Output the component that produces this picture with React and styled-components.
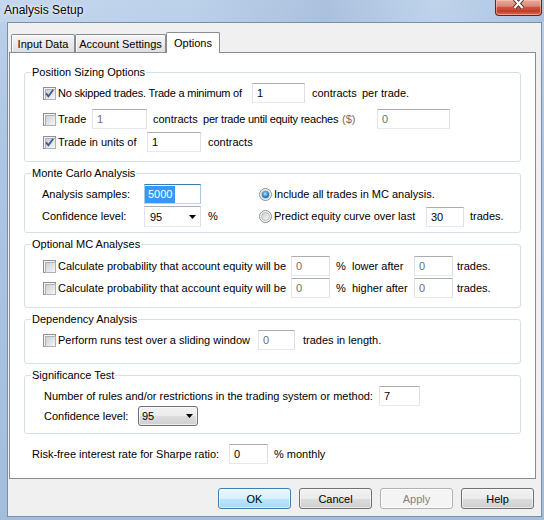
import React from "react"
import styled, { createGlobalStyle, css } from "styled-components"

const GlobalStyle = createGlobalStyle`
  html, body {
    margin: 0;
    padding: 0;
    background: #a9c2e0;
  }
  body {
    width: 544px;
    height: 520px;
    overflow: hidden;
    font-family: "Liberation Sans", Arial, sans-serif;
    font-size: 11px;
    color: #000;
  }
  * {
    box-sizing: border-box;
  }
`

const Window = styled.div`
  width: 544px;
  height: 520px;
  display: flex;
  flex-direction: column;
  background: linear-gradient(180deg, #bcd1ea 0%, #adc5e2 30%, #a3bddc 100%);
`

const TitleBar = styled.div`
  height: 22px;
  flex: none;
  display: flex;
  justify-content: space-between;
  align-items: flex-start;
  background: linear-gradient(
    90deg,
    rgba(255, 255, 255, 0.12) 0%,
    rgba(255, 255, 255, 0) 35%,
    rgba(70, 100, 150, 0.14) 60%,
    rgba(255, 255, 255, 0.05) 80%,
    rgba(70, 100, 150, 0.12) 100%
  );
`

const Title = styled.span`
  padding: 3px 0 0 4px;
  font-size: 12px;
  line-height: 15px;
  text-shadow: 0 0 5px rgba(255, 255, 255, 0.9), 0 0 2px rgba(255, 255, 255, 0.8);
`

const CloseButton = styled.div`
  width: 47px;
  height: 16px;
  margin-right: 2px;
  border: 1px solid #5d2620;
  border-top: 0;
  border-radius: 0 0 4px 4px;
  background: linear-gradient(180deg, #e9a99b 0%, #dc8a78 40%, #c95541 50%, #c53c26 75%, #d8735b 100%);
  box-shadow: inset 0 0 0 1px rgba(255, 210, 200, 0.5);
  display: flex;
  justify-content: center;
  align-items: flex-start;
`

const Client = styled.div`
  flex: 1;
  margin: 0 2px 3px 7px;
  border: 1px solid #7b8ea8;
  background: #f0f0f0;
  display: flex;
  flex-direction: column;
  padding-bottom: 7px;
`

const TabStrip = styled.div`
  height: 29px;
  flex: none;
  display: flex;
  align-items: flex-end;
  padding-left: 3px;
`

const Tab = styled.div`
  position: relative;
  z-index: ${p => (p.$active ? 1 : 0)};
  width: ${p => p.$w}px;
  height: ${p => (p.$active ? 21 : 18)}px;
  margin-bottom: ${p => (p.$active ? -1 : 0)}px;
  padding-top: ${p => (p.$active ? 0 : 1)}px;
  border: 1px solid #898c95;
  border-bottom: 0;
  border-radius: 2px 2px 0 0;
  background: ${p => (p.$active ? "#fff" : "linear-gradient(180deg, #f6f6f6 0%, #ebebeb 50%, #dedede 100%)")};
  box-shadow: ${p => (p.$active ? "none" : "inset 1px 1px 0 rgba(255, 255, 255, 0.8)")};
  display: flex;
  align-items: center;
  justify-content: center;
  white-space: nowrap;
`

const Panel = styled.div`
  margin: 0 5px 0 1px;
  border: 1px solid #898c95;
  background: #fff;
  padding: 12px 14px 14px;
  display: flex;
  flex-direction: column;
`

const Group = styled.fieldset`
  margin: 0;
  padding: 0 6px;
  min-width: 0;
  border: 1px solid #d5dfe5;
  border-radius: 3px;

  & + & {
    margin-top: 4px;
  }
`

const Legend = styled.legend`
  padding: 0 1px;
  font-size: 11px;
  line-height: 15px;
`

const GroupBody = styled.div`
  display: flex;
  flex-direction: column;
  padding: ${p => p.$top}px 0 ${p => p.$bottom}px ${p => p.$indent ?? 12}px;
`

const Row = styled.div`
  display: flex;
  align-items: center;
  height: ${p => p.$h ?? 20}px;
  margin-top: ${p => p.$gap ?? 0}px;
  padding-left: ${p => p.$indent ?? 0}px;
`

const Text = styled.span`
  flex: none;
  white-space: nowrap;
  line-height: 13px;
  width: ${p => (p.$w ? `${p.$w}px` : "auto")};
  margin-left: ${p => p.$ml ?? 0}px;
  letter-spacing: ${p => (p.$tight ? "-0.22px" : "0")};
  color: ${p => (p.$muted ? "#6d6d6d" : "#000")};
`

const Field = styled.div`
  flex: none;
  width: ${p => p.$w}px;
  height: 20px;
  border: 1px solid;
  border-color: ${p => (p.$focused ? "#3d7bad #a4c9e3 #b7d9ed #a4c9e3" : "#abadb3 #dbdfe6 #e3e9ef #e2e3ea")};
  background: #fff;
  padding-left: ${p => (p.$focused ? 0 : 4)}px;
  display: flex;
  align-items: center;
  color: ${p => (p.$disabled ? "#6d6d6d" : "#000")};
`

const Selection = styled.span`
  height: 17px;
  padding: 0 3px;
  display: flex;
  align-items: center;
  background: #3399ff;
  color: #fff;
`

const Combo = styled.div`
  flex: none;
  width: ${p => p.$w}px;
  height: ${p => p.$h ?? 21}px;
  display: flex;
  align-items: center;
  justify-content: space-between;
  ${p =>
    p.$variant === "list"
      ? css`
          padding: 0 4px 0 3px;
          border: 1px solid #707070;
          border-radius: 3px;
          background: linear-gradient(180deg, #f2f2f2 0%, #ebebeb 50%, #dddddd 50%, #cfcfcf 100%);
          box-shadow: inset 0 0 0 1px rgba(255, 255, 255, 0.6);
        `
      : css`
          padding: 0 4px 0 5px;
          border: 1px solid;
          border-color: #abadb3 #dbdfe6 #e3e9ef #e2e3ea;
          background: #fff;
        `}
`

const CheckBoxBox = styled.span`
  position: relative;
  flex: none;
  width: 13px;
  height: 13px;
  margin-right: 2px;
  padding: 1px;
  border: 1px solid #8e8f8f;
  background: #f4f4f4;

  &::before {
    content: "";
    display: block;
    width: 9px;
    height: 9px;
    border: 1px solid #aeb3b9;
    background: linear-gradient(135deg, #cbcfd5 0%, #e3e5e8 55%, #f7f7f7 100%);
  }

  svg {
    position: absolute;
    left: -1px;
    top: -1px;
  }
`

const RadioBox = styled.span`
  position: relative;
  flex: none;
  width: 13px;
  height: 13px;
  margin-left: ${p => p.$ml ?? 0}px;
  margin-right: 2px;
  border-radius: 50%;
  border: 1px solid #8e8f8f;
  background: #f4f4f4;

  &::before {
    content: "";
    position: absolute;
    inset: 1px;
    border-radius: 50%;
    border: 1px solid #b9bcc1;
    background: linear-gradient(135deg, #c8cbd0 0%, #e5e6e8 55%, #f8f8f8 100%);
  }

  ${p =>
    p.$checked &&
    css`
      &::after {
        content: "";
        position: absolute;
        left: 2px;
        top: 2px;
        width: 7px;
        height: 7px;
        border-radius: 50%;
        background: radial-gradient(circle at 45% 40%, #c4e8fc 0%, #4ea7e2 35%, #1166ad 70%, #0b3d6b 100%);
      }
    `}
`

const ButtonRow = styled.div`
  display: flex;
  justify-content: flex-end;
  gap: 8px;
  margin-top: 9px;
  padding-right: 7px;
`

const buttonLooks = {
  normal: css`
    border-color: #707070;
    background: linear-gradient(180deg, #f2f2f2 0%, #ebebeb 50%, #dddddd 50%, #cfcfcf 100%);
    color: #000;
  `,
  primary: css`
    border-color: #3c7fb1;
    background: linear-gradient(180deg, #eaf6fd 0%, #d9f0fc 50%, #bee6fd 50%, #a7d9f5 100%);
    color: #000;
  `,
  disabled: css`
    border-color: #adb2b5;
    background: #f4f4f4;
    color: #838383;
  `,
}

const Button = styled.div`
  width: 73px;
  height: 21px;
  border: 1px solid;
  border-radius: 3px;
  box-shadow: inset 0 0 0 1px rgba(255, 255, 255, 0.55);
  display: flex;
  align-items: center;
  justify-content: center;
  ${p => buttonLooks[p.$variant ?? "normal"]}
`

function CheckBox({ checked }) {
  return (
    <CheckBoxBox>
      {checked && (
        <svg width="13" height="13" viewBox="0 0 13 13">
          <path d="M3 6.4 L5.4 9.2 L10.2 2.8" fill="none" stroke="#3f5a92" strokeWidth="1.8" />
        </svg>
      )}
    </CheckBoxBox>
  )
}

function Arrow() {
  return (
    <svg width="7" height="4" viewBox="0 0 7 4">
      <path d="M0 0 H7 L3.5 4 Z" fill="#000" />
    </svg>
  )
}

function CloseGlyph() {
  return (
    <svg width="13" height="10" viewBox="0 0 13 10">
      <path d="M2.5 -1 L10.5 8 M10.5 -1 L2.5 8" stroke="#4a2320" strokeWidth="4" />
      <path d="M2.5 -1 L10.5 8 M10.5 -1 L2.5 8" stroke="#fff" strokeWidth="2.2" />
    </svg>
  )
}

export default function App() {
  return (
    <>
      <GlobalStyle />
      <Window>
        <TitleBar>
          <Title>Analysis Setup</Title>
          <CloseButton>
            <CloseGlyph />
          </CloseButton>
        </TitleBar>

        <Client>
          <TabStrip>
            <Tab $w={64}>Input Data</Tab>
            <Tab $w={91}>Account Settings</Tab>
            <Tab $w={54} $active>Options</Tab>
          </TabStrip>

          <Panel>
            <Group>
              <Legend>Position Sizing Options</Legend>
              <GroupBody $top={3} $bottom={9}>
                <Row>
                  <CheckBox checked />
                  <Text $w={194} $tight>No skipped trades. Trade a minimum of</Text>
                  <Field $w={53}>1</Field>
                  <Text $ml={7} $w={50}>contracts</Text>
                  <Text>per trade.</Text>
                </Row>
                <Row $gap={6}>
                  <CheckBox />
                  <Text $w={34}>Trade</Text>
                  <Field $w={55} $disabled>1</Field>
                  <Text $ml={6} $w={50}>contracts</Text>
                  <Text $w={139} $tight>per trade until equity reaches</Text>
                  <Text $w={35} $muted>($)</Text>
                  <Field $w={73} $disabled>0</Field>
                </Row>
                <Row $gap={3}>
                  <CheckBox checked />
                  <Text $w={89}>Trade in units of</Text>
                  <Field $w={54}>1</Field>
                  <Text $ml={7}>contracts</Text>
                </Row>
              </GroupBody>
            </Group>

            <Group>
              <Legend>Monte Carlo Analysis</Legend>
              <GroupBody $top={3} $bottom={5} $indent={11}>
                <Row>
                  <Text $w={102}>Analysis samples:</Text>
                  <Field $w={57} $focused>
                    <Selection>5000</Selection>
                  </Field>
                  <RadioBox $checked $ml={58} />
                  <Text>Include all trades in MC analysis.</Text>
                </Row>
                <Row $gap={2} $h={21}>
                  <Text $w={102}>Confidence level:</Text>
                  <Combo $w={57}>
                    95
                    <Arrow />
                  </Combo>
                  <Text $ml={7} $w={51}>%</Text>
                  <RadioBox />
                  <Text $w={152}>Predict equity curve over last</Text>
                  <Field $w={38}>30</Field>
                  <Text $ml={6}>trades.</Text>
                </Row>
              </GroupBody>
            </Group>

            <Group>
              <Legend>Optional MC Analyses</Legend>
              <GroupBody $top={4} $bottom={9}>
                <Row>
                  <CheckBox />
                  <Text $w={233}>Calculate probability that account equity will be</Text>
                  <Field $w={39} $disabled>0</Field>
                  <Text $ml={6} $w={16}>%</Text>
                  <Text $w={62}>lower after</Text>
                  <Field $w={39} $disabled>0</Field>
                  <Text $ml={4}>trades.</Text>
                </Row>
                <Row $gap={2}>
                  <CheckBox />
                  <Text $w={233}>Calculate probability that account equity will be</Text>
                  <Field $w={39} $disabled>0</Field>
                  <Text $ml={6} $w={16}>%</Text>
                  <Text $w={62}>higher after</Text>
                  <Field $w={39} $disabled>0</Field>
                  <Text $ml={4}>trades.</Text>
                </Row>
              </GroupBody>
            </Group>

            <Group>
              <Legend>Dependency Analysis</Legend>
              <GroupBody $top={3} $bottom={13}>
                <Row>
                  <CheckBox />
                  <Text $w={200}>Perform runs test over a sliding window</Text>
                  <Field $w={37} $disabled>0</Field>
                  <Text $ml={8}>trades in length.</Text>
                </Row>
              </GroupBody>
            </Group>

            <Group>
              <Legend>Significance Test</Legend>
              <GroupBody $top={3} $bottom={7} $indent={13}>
                <Row>
                  <Text $w={335}>Number of rules and/or restrictions in the trading system or method:</Text>
                  <Field $w={41}>7</Field>
                </Row>
                <Row>
                  <Text $w={94}>Confidence level:</Text>
                  <Combo $variant="list" $w={60} $h={20}>
                    95
                    <Arrow />
                  </Combo>
                </Row>
              </GroupBody>
            </Group>

            <Row $gap={10} $indent={8}>
              <Text $w={197}>Risk-free interest rate for Sharpe ratio:</Text>
              <Field $w={39}>0</Field>
              <Text $ml={6}>% monthly</Text>
            </Row>
          </Panel>

          <ButtonRow>
            <Button $variant="primary">OK</Button>
            <Button>Cancel</Button>
            <Button $variant="disabled">Apply</Button>
            <Button>Help</Button>
          </ButtonRow>
        </Client>
      </Window>
    </>
  )
}
